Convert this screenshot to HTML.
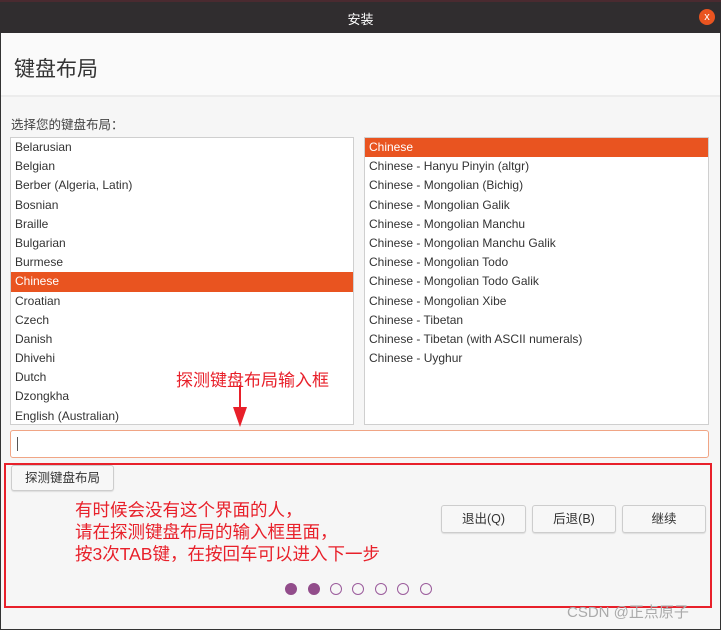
<!DOCTYPE html>
<html><head><meta charset="utf-8"><style>
*{margin:0;padding:0;box-sizing:border-box}
body{width:721px;height:630px;position:relative;background:#f6f6f6;font-family:"Liberation Sans","Noto Sans CJK SC",sans-serif;overflow:hidden;color:#3c3c3c}
.abs{position:absolute}
.tb{left:0;top:0;width:721px;height:33px;background:#302d2f;border-top:2px solid #4a2a30}
.tb .t{position:absolute;left:0;right:0;top:7px;text-align:center;color:#fff;font-size:13px}
.close{right:6px;top:9px;width:16px;height:16px;border-radius:50%;background:#e95420;color:#fff;font-size:11px;text-align:center;line-height:16px}
.hdr{left:1px;top:33px;width:719px;height:64px;background:#fafafa;border-bottom:2px solid #ececec}
.hdr div{position:absolute;left:13px;top:20px;font-size:21px;color:#333}
.list{background:#fff;border:1px solid #cfcfcf}
.list div{height:19.2px;line-height:19px;padding-left:4px;font-size:12px;color:#333}
.list .sel{background:#e95420;color:#fff}
.btn{border:1px solid #cdcdcd;border-radius:3px;background:#f7f7f7;font-size:12.5px;text-align:center;color:#333;box-shadow:0 1px 1px #ddd}
.dot{width:12px;height:12px;border-radius:50%;border:1.5px solid #9b5c9c;top:583px}
.red{color:#e8202a}
</style></head><body>
<div class="abs" style="left:0;top:0;width:1px;height:630px;background:#333"></div>
<div class="abs" style="right:0;top:0;width:1px;height:630px;background:#333"></div>
<div class="abs" style="left:0;bottom:0;width:721px;height:1px;background:#333"></div>
<div class="abs tb"><div class="t">安装</div></div>
<div class="abs close">x</div>
<div class="abs hdr"><div>键盘布局</div></div>
<div class="abs" style="left:11px;top:114px;font-size:12.5px;color:#444">选择您的键盘布局：</div>
<div class="abs list" style="left:10px;top:137px;width:344px;height:288px;overflow:hidden">
<div>Belarusian</div><div>Belgian</div><div>Berber (Algeria, Latin)</div><div>Bosnian</div><div>Braille</div><div>Bulgarian</div><div>Burmese</div><div class="sel">Chinese</div><div>Croatian</div><div>Czech</div><div>Danish</div><div>Dhivehi</div><div>Dutch</div><div>Dzongkha</div><div>English (Australian)</div>
</div>
<div class="abs list" style="left:364px;top:137px;width:345px;height:288px">
<div class="sel">Chinese</div><div>Chinese - Hanyu Pinyin (altgr)</div><div>Chinese - Mongolian (Bichig)</div><div>Chinese - Mongolian Galik</div><div>Chinese - Mongolian Manchu</div><div>Chinese - Mongolian Manchu Galik</div><div>Chinese - Mongolian Todo</div><div>Chinese - Mongolian Todo Galik</div><div>Chinese - Mongolian Xibe</div><div>Chinese - Tibetan</div><div>Chinese - Tibetan (with ASCII numerals)</div><div>Chinese - Uyghur</div>
</div>
<div class="abs red" style="left:176px;top:366px;font-size:17px">探测键盘布局输入框</div>
<svg class="abs" style="left:230px;top:385px" width="20" height="43"><line x1="10" y1="0" x2="10" y2="28" stroke="#e8202a" stroke-width="2"/><polygon points="3,22 17,22 10,42" fill="#e8202a"/></svg>
<div class="abs" style="left:10px;top:430px;width:699px;height:28px;background:#fff;border:1px solid #f0a585;border-radius:3px"></div>
<div class="abs" style="left:17px;top:437px;width:1px;height:14px;background:#555"></div>
<div class="abs" style="left:4px;top:463px;width:708px;height:145px;border:2px solid #e8202a"></div>
<div class="abs btn" style="left:11px;top:465px;width:103px;height:26px;line-height:24px">探测键盘布局</div>
<div class="abs red" style="left:75px;top:499px;font-size:17.5px;line-height:22px">有时候会没有这个界面的人，<br>请在探测键盘布局的输入框里面，<br>按3次TAB键，在按回车可以进入下一步</div>
<div class="abs btn" style="left:441px;top:505px;width:85px;height:28px;line-height:26px">退出(Q)</div>
<div class="abs btn" style="left:532px;top:505px;width:84px;height:28px;line-height:26px">后退(B)</div>
<div class="abs btn" style="left:622px;top:505px;width:84px;height:28px;line-height:26px">继续</div>
<div class="abs dot" style="left:285px;background:#924d8b;border-color:#924d8b"></div>
<div class="abs dot" style="left:308px;background:#924d8b;border-color:#924d8b"></div>
<div class="abs dot" style="left:330px"></div>
<div class="abs dot" style="left:352px"></div>
<div class="abs dot" style="left:375px"></div>
<div class="abs dot" style="left:397px"></div>
<div class="abs dot" style="left:420px"></div>
<div class="abs" style="left:567px;top:601px;font-size:15px;color:#aaa">CSDN @正点原子</div>
</body></html>
